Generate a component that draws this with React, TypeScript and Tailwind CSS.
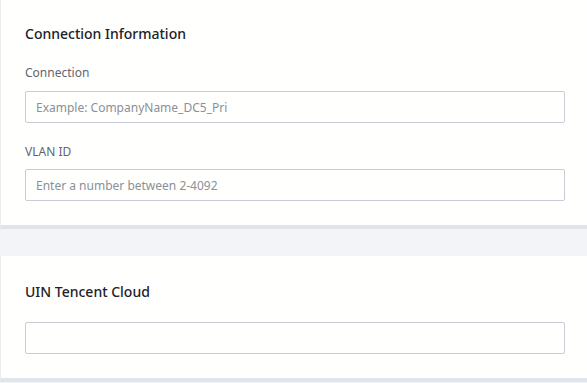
export default function App() {
  return (
    <div
      className="w-[587px] h-[383px] overflow-hidden bg-[#f2f4f7] text-[#1d2129]"
      style={{ fontFamily: '"Noto Sans", "Open Sans", sans-serif' }}
    >
      <section className="h-[229px] bg-[#fffffd] border-l border-[#ececec] border-b-4 border-b-[#e1e5eb] pl-6 pr-[22px] pt-[24px]">
        <h2 className="text-[14px] font-medium leading-5">Connection Information</h2>
        <label className="block mt-[21px] text-[12px] leading-4 text-[#5f6570]">Connection</label>
        <input
          className="mt-[10px] block w-full h-[32px] border border-[#c9ccd6] rounded-[2px] bg-transparent px-[10px] text-[12px] placeholder:text-[#8a8f99] outline-none"
          placeholder="Example: CompanyName_DC5_Pri"
        />
        <label className="block mt-[21px] text-[12px] leading-4 text-[#5f6570]">VLAN ID</label>
        <input
          className="mt-[9px] block w-full h-[32px] border border-[#c9ccd6] rounded-[2px] bg-transparent px-[10px] text-[12px] placeholder:text-[#8a8f99] outline-none"
          placeholder="Enter a number between 2-4092"
        />
      </section>
      <div className="h-[27px]" />
      <section className="h-[126px] bg-[#fffffd] border-l border-[#ececec] border-b-4 border-b-[#e1e5eb] pl-6 pr-[22px] pt-[26px]">
        <h2 className="text-[14px] font-medium leading-5">UIN Tencent Cloud</h2>
        <input className="mt-[20px] block w-full h-[32px] border border-[#c9ccd6] rounded-[2px] bg-transparent px-[10px] text-[12px] outline-none" />
      </section>
    </div>
  );
}
